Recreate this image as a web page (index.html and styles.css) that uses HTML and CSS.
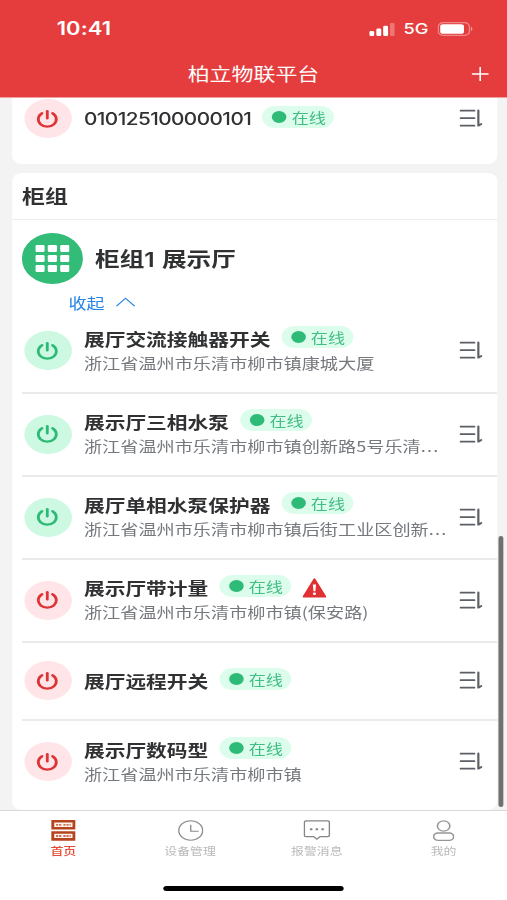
FILE: index.html
```html
<!DOCTYPE html>
<html lang="zh-CN">
<head>
<meta charset="UTF-8">
<title>柏立物联平台</title>
<link rel="stylesheet" href="styles.css">
</head>
<body>
<svg width="0" height="0" class="defs">
  <symbol id="power" viewBox="0 0 20 20"><path d="M5.5 4.2A7.4 7.4 0 1 0 14.1 4.2" fill="none" stroke="currentColor" stroke-width="2.3" stroke-linecap="round"/><path d="M9.8 2.2V9.4" fill="none" stroke="currentColor" stroke-width="2.3" stroke-linecap="round"/></symbol>
  <symbol id="sort" viewBox="0 0 19 19"><path d="M.9 1.7H12.2M.9 9.2H12.2M.9 16.7H12.2" fill="none" stroke="currentColor" stroke-width="1.7" stroke-linecap="round"/><path d="M15.5 1.5V16.7L17.9 15" fill="none" stroke="currentColor" stroke-width="1.8" stroke-linecap="round" stroke-linejoin="round"/></symbol>
</svg>
<div class="phone">
  <header class="header">
    <div class="status">
      <span class="time">10:41</span>
      <div class="signals">
        <svg width="21" height="14" viewBox="0 0 21 14"><rect x="0" y="9" width="4" height="5" rx="1.2" fill="#fff"/><rect x="5.8" y="6.5" width="4" height="7.5" rx="1.2" fill="#fff"/><rect x="11.4" y="3.8" width="4" height="10.2" rx="1.2" fill="#fff"/><rect x="17" y="1" width="3.8" height="13" rx="1.2" fill="#fff" opacity=".3"/></svg>
        <span class="net">5G</span>
        <svg width="29" height="14" viewBox="0 0 29 14"><rect x=".6" y=".6" width="25.6" height="12.8" rx="4" fill="none" stroke="#fff" stroke-width="1.1" opacity=".4"/><rect x="2.2" y="2.2" width="19.5" height="9.6" rx="2.4" fill="#fff"/><path d="M27.4 4.8Q30 7 27.4 9.2Z" fill="#fff" opacity=".5"/></svg>
      </div>
    </div>
    <div class="nav">
      <h1>柏立物联平台</h1>
      <svg class="plus" width="14" height="14" viewBox="0 0 14 14"><path d="M7 0V14M0 7H14" stroke="#fff" stroke-width="1.3"/></svg>
    </div>
  </header>

  <main class="content">
    <section class="card card-top">
      <div class="row row-first">
        <span class="switch off"><svg width="20" height="20"><use href="#power"/></svg></span>
        <div class="info"><div class="line"><b class="name code">010125100000101</b><span class="badge">在线</span></div></div>
        <svg class="sort" width="19" height="19"><use href="#sort"/></svg>
      </div>
    </section>

    <section class="card card-group">
      <h2>柜组</h2>
      <div class="group">
        <span class="grid-icon"><svg width="28" height="27" viewBox="0 0 28 27" fill="#fff"><rect width="7.6" height="7" rx="1.3"/><rect x="10.2" width="7.6" height="7" rx="1.3"/><rect x="20.4" width="7.6" height="7" rx="1.3"/><rect y="10" width="7.6" height="7" rx="1.3"/><rect x="10.2" y="10" width="7.6" height="7" rx="1.3"/><rect x="20.4" y="10" width="7.6" height="7" rx="1.3"/><rect y="20" width="7.6" height="7" rx="1.3"/><rect x="10.2" y="20" width="7.6" height="7" rx="1.3"/><rect x="20.4" y="20" width="7.6" height="7" rx="1.3"/></svg></span>
        <h3>柜组<span class="num">1</span> 展示厅</h3>
      </div>
      <div class="fold"><span>收起</span><svg width="16" height="10" viewBox="0 0 16 10"><path d="M.6 9.2L8 1.2L15.4 9.2" fill="none" stroke="currentColor" stroke-width="1.1"/></svg></div>

      <div class="row">
        <span class="switch on"><svg width="20" height="20"><use href="#power"/></svg></span>
        <div class="info"><div class="line"><b class="name">展厅交流接触器开关</b><span class="badge">在线</span></div><p>浙江省温州市乐清市柳市镇康城大厦</p></div>
        <svg class="sort" width="19" height="19"><use href="#sort"/></svg>
      </div>
      <div class="row">
        <span class="switch on"><svg width="20" height="20"><use href="#power"/></svg></span>
        <div class="info"><div class="line"><b class="name">展示厅三相水泵</b><span class="badge">在线</span></div><p>浙江省温州市乐清市柳市镇创新路5号乐清<i>...</i></p></div>
        <svg class="sort" width="19" height="19"><use href="#sort"/></svg>
      </div>
      <div class="row">
        <span class="switch on"><svg width="20" height="20"><use href="#power"/></svg></span>
        <div class="info"><div class="line"><b class="name">展厅单相水泵保护器</b><span class="badge">在线</span></div><p>浙江省温州市乐清市柳市镇后街工业区创新<i>...</i></p></div>
        <svg class="sort" width="19" height="19"><use href="#sort"/></svg>
      </div>
      <div class="row">
        <span class="switch off"><svg width="20" height="20"><use href="#power"/></svg></span>
        <div class="info"><div class="line"><b class="name">展示厅带计量</b><span class="badge">在线</span><svg class="alert" width="20" height="20" viewBox="0 0 20 20"><path d="M10 1.2L19 18.8H1Z" fill="#e13033" stroke="#e13033" stroke-width="1.6" stroke-linejoin="round"/><path d="M8.7 6.5H11.3L10.8 13.3H9.2Z" fill="#fff"/><circle cx="10" cy="15.8" r="1.3" fill="#fff"/></svg></div><p>浙江省温州市乐清市柳市镇(保安路)</p></div>
        <svg class="sort" width="19" height="19"><use href="#sort"/></svg>
      </div>
      <div class="row row-short">
        <span class="switch off"><svg width="20" height="20"><use href="#power"/></svg></span>
        <div class="info"><div class="line"><b class="name">展厅远程开关</b><span class="badge">在线</span></div></div>
        <svg class="sort" width="19" height="19"><use href="#sort"/></svg>
      </div>
      <div class="row row-last">
        <span class="switch off"><svg width="20" height="20"><use href="#power"/></svg></span>
        <div class="info"><div class="line"><b class="name">展示厅数码型</b><span class="badge">在线</span></div><p>浙江省温州市乐清市柳市镇</p></div>
        <svg class="sort" width="19" height="19"><use href="#sort"/></svg>
      </div>
    </section>
    <div class="scrollbar"></div>
  </main>

  <footer class="tabbar">
    <nav class="tabs">
      <div class="tab active"><svg width="20" height="21" viewBox="0 0 20 21"><path d="M0 0H20V9.5H0ZM0 11.2H20V20.7H0Z" fill="#b5431f"/><path d="M2.5 2.6H17.5V6.9H2.5ZM2.5 13.8H17.5V18.1H2.5Z" fill="#fff4ee"/><path d="M4 4.8H8.5M10 4.8H16M4 16H8.5M10 16H16" stroke="#b5431f" stroke-width="1.3" stroke-dasharray="1.8 .7"/></svg><span>首页</span></div>
      <div class="tab"><svg width="21" height="21" viewBox="0 0 21 21" fill="none" stroke="#8c8c8c" stroke-width="1.1"><circle cx="10.5" cy="10.5" r="9.8"/><path d="M10.5 4.8V11.2H17"/></svg><span>设备管理</span></div>
      <div class="tab"><svg width="22" height="21" viewBox="0 0 22 21" fill="none" stroke="#858585" stroke-width="1.2"><path d="M2.3.8H19.7Q21.3.8 21.3 2.4V15Q21.3 16.6 19.7 16.6H13.6L11 19.2L8.4 16.6H2.3Q.7 16.6.7 15V2.4Q.7.8 2.3.8Z"/><path d="M5.3 9.2H7.3M10 9.2H12M14.7 9.2H16.7" stroke-width="2"/></svg><span>报警消息</span></div>
      <div class="tab"><svg width="18" height="21" viewBox="0 0 18 21" fill="none" stroke="#969696" stroke-width="1.3"><circle cx="9" cy="6" r="5.1"/><rect x=".8" y="13" width="16.4" height="7.3" rx="3.6"/></svg><span>我的</span></div>
    </nav>
    <div class="home-indicator"></div>
  </footer>
</div>
</body>
</html>
```
FILE: styles.css
```css
* { box-sizing: border-box; margin: 0; padding: 0; }

html, body { width: 507px; height: 900px; overflow: hidden; background: #fff; }

body { font-family: "Noto Sans CJK SC", "Noto Sans", sans-serif; color: #303133; }

svg { display: block; flex: none; }
.defs { position: absolute; }

/* 416px wide layout, widened to fill the 507px window */
.phone {
  width: 416px;
  height: 900px;
  display: flex;
  flex-direction: column;
  transform: scaleX(1.21875);
  transform-origin: 0 0;
}

.header { height: 98px; flex: none; background: #e53d3d; color: #fff; border-bottom: 1px solid #f0a0a0; }
.status { height: 56px; padding: 2px 28px 0 46.5px; display: flex; align-items: center; justify-content: space-between; }
.time { font: 600 18px/20px Inter, sans-serif; letter-spacing: .1px; }
.signals { display: flex; align-items: center; }
.net { font: 500 15px/18px Inter, sans-serif; margin: 0 7.5px 0 7.5px; }
.nav { height: 36px; display: grid; grid-template-columns: 1fr auto 1fr; align-items: center; padding: 0 15px; }
.nav h1 { grid-column: 2; font-size: 18px; line-height: 24px; font-weight: 400; padding-bottom: 2px; }
.plus { justify-self: end; }

.content { height: 712px; flex: none; background: #f3f3f3; padding: 0 8.5px 0 9.7px; position: relative; }
.card { background: #fff; border-radius: 8px; }
.card-top { height: 66px; border-radius: 0 0 8px 8px; }
.card-group { margin-top: 9px; height: 637px; }

h2 { height: 47px; font-size: 18.8px; line-height: 46px; font-weight: 700; padding-left: 8.4px; border-bottom: 1px solid #ececec; }
.group { height: 77px; display: flex; align-items: center; padding-left: 8.3px; gap: 9.5px; }
.grid-icon { width: 50.5px; height: 51px; border-radius: 50%; background: #33bb78; display: flex; align-items: center; justify-content: center; }
h3 { font-size: 20.2px; line-height: 28px; font-weight: 700; padding-top: 1px; }
.num { font-family: Inter, sans-serif; font-weight: 600; letter-spacing: 1.4px; }
.fold { height: 13px; display: flex; align-items: flex-start; gap: 9px; padding-left: 46.5px; color: #2584ea; font-size: 14.8px; line-height: 12px; }

.row { height: 83px; margin-left: 8px; padding: 0 11.3px 0 2.2px; display: flex; align-items: center; border-bottom: 2px solid #ebebed; }
.row:nth-of-type(3) { height: 83.5px; }
.row-short { height: 78px; }
.row-first { height: 41px; border: 0; }
.row-last { height: 82px; border: 0; }
.switch { width: 39px; height: 39px; flex: none; border-radius: 50%; display: flex; align-items: center; justify-content: center; }
.on { background: #cdf8e1; color: #2dba76; }
.off { background: #ffe5e7; color: #de3437; }
.info { flex: 1; min-width: 0; padding-left: 10px; }
.line { display: flex; align-items: center; height: 24px; }
.name { font-size: 17px; line-height: 24px; font-weight: 700; white-space: nowrap; }
.code { font-family: Inter, sans-serif; font-weight: 500; letter-spacing: -.45px; }
.badge { height: 22px; margin: -4px 0 0 9.1px; padding: 0 6.7px 0 7.6px; border-radius: 11px; background: #dcfdec; color: #43bd85; font-size: 14px; line-height: 22px; display: flex; align-items: center; gap: 4.5px; }
.badge::before { content: ""; width: 12px; height: 12px; border-radius: 50%; background: #2dbb77; }
.alert { margin-left: 9.2px; }
.info p { font-size: 14.9px; line-height: 24px; color: #75797e; white-space: nowrap; }
.info p i { font-style: normal; letter-spacing: 1px; }
.sort { color: #5c5f66; }

.scrollbar { position: absolute; right: 3px; top: 438px; width: 4px; height: 271px; border-radius: 2px; background: #707070; }

.tabbar { flex: 1; background: #fff; border-top: 1px solid #d9d9d9; display: flex; flex-direction: column; align-items: center; }
.tabs { width: 100%; height: 75px; display: grid; grid-template-columns: repeat(4, 1fr); padding-top: 9px; }
.tab { display: flex; flex-direction: column; align-items: center; gap: 2px; color: #b9b9b9; font-size: 10.6px; line-height: 16px; }
.active { color: #e54b35; font-weight: 500; }
.home-indicator { width: 148px; height: 5px; border-radius: 3px; background: #000; }
```
